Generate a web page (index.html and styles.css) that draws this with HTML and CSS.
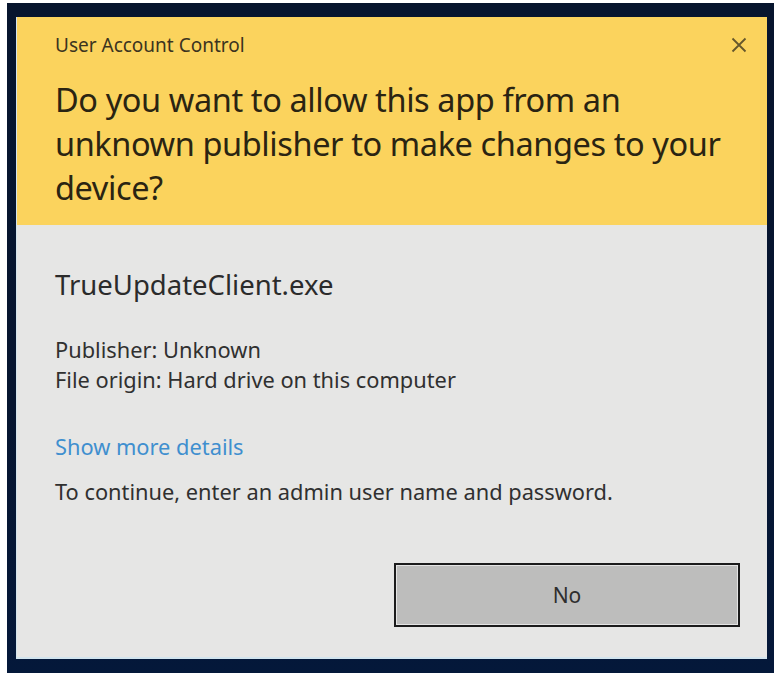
FILE: index.html
```html
<!DOCTYPE html>
<html lang="en">
<head>
<meta charset="utf-8">
<title>User Account Control</title>
<link rel="stylesheet" href="styles.css">
</head>
<body>
<div class="frame">
  <div class="dialog">
    <header class="banner">
      <div class="titlebar">
        <span class="caption">User Account Control</span>
        <svg class="close" width="16" height="16" viewBox="0 0 16 16" aria-label="Close">
          <path d="M1.5 1.5 L14.5 14.5 M14.5 1.5 L1.5 14.5" stroke="#65572c" stroke-width="1.8" fill="none"/>
        </svg>
      </div>
      <h1 class="question">Do you want to allow this app from an<br>unknown publisher to make changes to your<br>device?</h1>
    </header>
    <section class="body">
      <div class="appname">TrueUpdateClient.exe</div>
      <div class="meta">
        <div>Publisher: Unknown</div>
        <div>File origin: Hard drive on this computer</div>
      </div>
      <a class="details" href="#">Show more details</a>
      <p class="prompt">To continue, enter an admin user name and password.</p>
      <div class="actions">
        <button class="btn" type="button">No</button>
      </div>
    </section>
  </div>
</div>
</body>
</html>
```

FILE: styles.css
```css
html, body {
  margin: 0;
  padding: 0;
  background: #ffffff;
}

body {
  font-family: "Noto Sans", "Open Sans", sans-serif;
  color: #2a2a2a;
}

/* dark desktop edge around the dialog */
.frame {
  margin: 3px 0 0 7px;
  height: 670px;
  box-sizing: border-box;
  padding: 14px 7px 14px 9px;
  background: linear-gradient(180deg, #07152e 0%, #061530 60%, #04183a 100%);
}

.dialog {
  height: 642px;
  display: flex;
  flex-direction: column;
  background: #e6e6e5;
  border-left: 1px solid #d4e4ec;
  border-bottom: 2px solid #d2e4ee;
  box-sizing: border-box;
}

.banner {
  height: 208px;
  flex: none;
  background: #fbd35d;
  padding: 0 20px 0 38px;
  box-sizing: border-box;
}

.titlebar {
  height: 56px;
  display: flex;
  align-items: center;
  justify-content: space-between;
}

.caption {
  font-size: 19px;
  color: #3b3320;
}

.close {
  display: block;
}

.question {
  margin: 5px 0 0;
  font-weight: 400;
  font-size: 32.5px;
  line-height: 44px;
  letter-spacing: -0.4px;
  color: #2a2412;
  white-space: nowrap;
}

.body {
  flex: 1;
  padding: 42px 0 0 38px;
  display: flex;
  flex-direction: column;
  align-items: flex-start;
}

.appname {
  font-size: 27.5px;
  line-height: 36px;
  color: #2b2b2b;
}

.meta {
  margin-top: 32px;
  font-size: 21.8px;
  line-height: 30px;
  color: #303030;
}

.details {
  margin-top: 37px;
  font-size: 21.8px;
  line-height: 30px;
  color: #3f8fcf;
  text-decoration: none;
}

.prompt {
  margin: 15px 0 0;
  font-size: 21.8px;
  line-height: 30px;
  color: #303030;
}

.actions {
  align-self: stretch;
  display: flex;
  justify-content: flex-end;
  padding-right: 27px;
  margin-top: 56px;
}

.btn {
  width: 346px;
  height: 64px;
  box-sizing: border-box;
  border: 2px solid #1b1b1b;
  box-shadow: inset 0 0 0 1px #e4e4e4;
  background: #bdbdbc;
  font-family: inherit;
  font-size: 21px;
  color: #2e2e2e;
  padding: 0;
}
```
